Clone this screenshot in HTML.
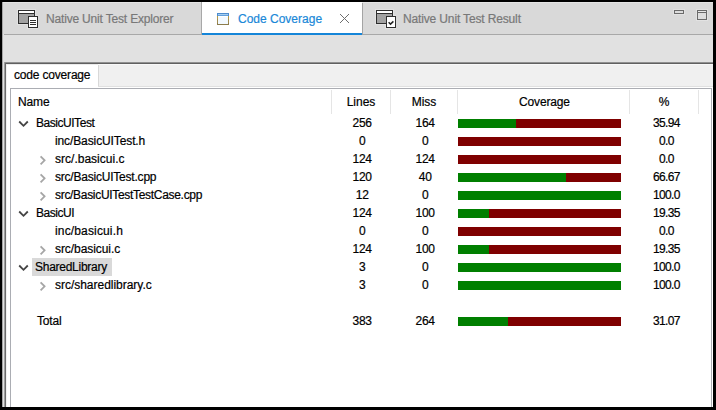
<!DOCTYPE html>
<html><head><meta charset="utf-8">
<style>
*{margin:0;padding:0;box-sizing:border-box}
html,body{width:716px;height:410px;overflow:hidden;background:#000}
body{position:relative;font-family:"Liberation Sans",sans-serif;font-size:12px;color:#000}
.a{position:absolute}
.t{position:absolute;white-space:nowrap;line-height:14px;-webkit-text-stroke:0.2px currentColor}
</style></head><body>
<!-- window -->
<div class="a" style="left:2px;top:2px;width:711px;height:405px;background:#e1e1e1"></div>
<!-- tab bar -->
<div class="a" style="left:2px;top:2px;width:711px;height:32px;background:#e4e4e4"></div>
<div class="a" style="left:3px;top:3px;width:710px;height:31px;background:#d9d9d9"></div>
<div class="a" style="left:2px;top:2px;width:1px;height:405px;background:#a6a6a6"></div>
<div class="a" style="left:4px;top:34px;width:709px;height:1px;background:#a8a8a8"></div>
<!-- active tab -->
<div class="a" style="left:201px;top:2px;width:1px;height:32px;background:#a8a8a8"></div>
<div class="a" style="left:202px;top:2px;width:160px;height:31px;background:#fff"></div>
<div class="a" style="left:202px;top:33px;width:160px;height:2px;background:#1585d8"></div>
<div class="a" style="left:362px;top:3px;width:1px;height:32px;background:#a4a4a4"></div>

<!-- tab 1 icon -->
<svg class="a" style="left:17px;top:9px" width="24" height="20" viewBox="0 0 24 20" shape-rendering="crispEdges">
 <rect x="0" y="0" width="19" height="16" fill="#e2e2e2"/>
 <rect x="10" y="6" width="11" height="14" fill="#e2e2e2"/>
 <rect x="1" y="1" width="17" height="14" fill="#2e2e2e"/>
 <rect x="2" y="2" width="15" height="2" fill="#fff"/>
 <rect x="2" y="5" width="15" height="9" fill="#a2a2a2"/>
 <rect x="11" y="7" width="10" height="12" fill="#2e2e2e"/>
 <rect x="12" y="8" width="8" height="10" fill="#fff"/>
 <rect x="13" y="11" width="6" height="1" fill="#2e2e2e"/>
 <rect x="13" y="13" width="6" height="1" fill="#2e2e2e"/>
 <rect x="13" y="15" width="6" height="1" fill="#2e2e2e"/>
</svg>

<!-- tab 2 icon -->
<svg class="a" style="left:217px;top:13px" width="12" height="12" viewBox="0 0 12 12" shape-rendering="crispEdges">
 <rect x="0" y="0" width="12" height="12" fill="#b49848"/>
 <rect x="0" y="6" width="12" height="6" fill="#a08a4c"/>
 <rect x="0" y="10" width="12" height="2" fill="#8c7c4c"/>
 <rect x="1" y="3" width="10" height="8" fill="#f2f9ff"/>
 <rect x="1" y="3" width="10" height="1" fill="#ffffff"/>
 <rect x="0" y="0" width="12" height="3" fill="#4d8cce"/>
 <rect x="1" y="2" width="10" height="1" fill="#62a0dc"/>
 <rect x="1" y="1" width="10" height="1" fill="#a4cdf0"/>
</svg>
<svg class="a" style="left:340px;top:14px" width="9" height="9" viewBox="0 0 9 9" shape-rendering="crispEdges">
 <g fill="#6e6e6e">
 <rect x="0" y="0" width="1" height="1"/><rect x="1" y="1" width="1" height="1"/><rect x="2" y="2" width="1" height="1"/><rect x="3" y="3" width="1" height="1"/><rect x="4" y="4" width="1" height="1"/><rect x="5" y="5" width="1" height="1"/><rect x="6" y="6" width="1" height="1"/><rect x="7" y="7" width="1" height="1"/><rect x="8" y="8" width="1" height="1"/>
 <rect x="8" y="0" width="1" height="1"/><rect x="7" y="1" width="1" height="1"/><rect x="6" y="2" width="1" height="1"/><rect x="5" y="3" width="1" height="1"/><rect x="3" y="5" width="1" height="1"/><rect x="2" y="6" width="1" height="1"/><rect x="1" y="7" width="1" height="1"/><rect x="0" y="8" width="1" height="1"/>
 </g>
</svg>

<!-- tab 3 icon -->
<svg class="a" style="left:375px;top:9px" width="24" height="20" viewBox="0 0 24 20">
 <g shape-rendering="crispEdges">
 <rect x="0" y="0" width="19" height="16" fill="#e2e2e2"/>
 <rect x="10" y="6" width="11" height="14" fill="#e2e2e2"/>
 <rect x="1" y="1" width="17" height="14" fill="#2e2e2e"/>
 <rect x="2" y="2" width="15" height="2" fill="#fff"/>
 <rect x="2" y="5" width="15" height="9" fill="#a2a2a2"/>
 <rect x="11" y="7" width="10" height="12" fill="#2e2e2e"/>
 <rect x="12" y="8" width="8" height="10" fill="#fff"/>
 </g>
 <path d="M13.6 13.3L15.5 15.1L18.4 12.4" stroke="#222" stroke-width="1.5" fill="none"/>
</svg>

<!-- min/max -->
<div class="a" style="left:674px;top:10px;width:10px;height:4px;border:1px solid #6a6a6a;background:#dcdcdc;box-shadow:0 0 0 1px #e2e2e2"></div>
<div class="a" style="left:697px;top:10px;width:10px;height:10px;border:1px solid #6a6a6a;background:#dedede;box-shadow:0 0 0 1px #e2e2e2"></div>
<div class="a" style="left:698px;top:11px;width:8px;height:1px;background:#e8e8e8"></div>
<div class="a" style="left:698px;top:12px;width:8px;height:1px;background:#6a6a6a"></div>

<!-- content panel -->
<div class="a" style="left:3px;top:35px;width:710px;height:27px;background:#e1e1e1"></div>
<div class="a" style="left:4px;top:62px;width:709px;height:1px;background:#909090"></div>
<div class="a" style="left:5px;top:63px;width:708px;height:1px;background:#606060"></div>
<div class="a" style="left:4px;top:62px;width:1px;height:345px;background:#a0a0a0"></div>
<div class="a" style="left:5px;top:63px;width:1px;height:344px;background:#6a6a6a"></div>
<div class="a" style="left:6px;top:64px;width:707px;height:343px;background:#fff"></div>
<div class="a" style="left:6px;top:64px;width:1px;height:343px;background:#f0f0f0"></div>
<div class="a" style="left:99px;top:65px;width:614px;height:21px;background:#f0f0f0"></div>
<div class="a" style="left:98px;top:65px;width:1px;height:22px;background:#d8d8d8"></div>
<div class="a" style="left:6px;top:64px;width:92px;height:1px;background:#ececec"></div>
<div class="a" style="left:98px;top:64px;width:615px;height:1px;background:#f8f8f8"></div>
<div class="a" style="left:98px;top:86px;width:615px;height:1px;background:#e0e0e0"></div>

<!-- table -->
<div class="a" style="left:10px;top:88px;width:702px;height:319px;border:1px solid #abadb3;border-bottom:0;background:#fff"></div>
<div class="a" style="left:331px;top:90px;width:1px;height:24px;background:#e5e5e5"></div>
<div class="a" style="left:390px;top:90px;width:1px;height:24px;background:#e5e5e5"></div>
<div class="a" style="left:457px;top:90px;width:1px;height:24px;background:#e5e5e5"></div>
<div class="a" style="left:629px;top:90px;width:1px;height:24px;background:#e5e5e5"></div>
<div class="a" style="left:698px;top:90px;width:1px;height:24px;background:#e5e5e5"></div>

<div class="t" style="left:332px;width:58px;text-align:center;top:95px">Lines</div>
<div class="t" style="left:391px;width:66px;text-align:center;top:95px">Miss</div>
<div class="t" style="left:630px;width:68px;text-align:center;top:95px">%</div>

<svg class="a" style="left:18px;top:120px" width="11" height="8" viewBox="0 0 11 8"><path d="M1.2 1.5L5.5 5.8L9.8 1.5" stroke="#444" stroke-width="1.8" fill="none"/></svg>
<div class="t" style="left:333px;width:58px;text-align:center;top:116px;letter-spacing:-0.3px;text-indent:0.3px">256</div>
<div class="t" style="left:392px;width:66px;text-align:center;top:116px;letter-spacing:-0.3px;text-indent:0.3px">164</div>
<div class="a" style="left:458px;top:119px;width:163px;height:9px;background:#7f0000"></div>
<div class="a" style="left:458px;top:119px;width:58px;height:9px;background:#007f00"></div>
<div class="t" style="left:632px;width:68px;text-align:center;top:116px;letter-spacing:-0.7px;text-indent:0.7px">35.94</div>
<div class="t" style="left:333px;width:58px;text-align:center;top:134px;letter-spacing:-0.3px;text-indent:0.3px">0</div>
<div class="t" style="left:392px;width:66px;text-align:center;top:134px;letter-spacing:-0.3px;text-indent:0.3px">0</div>
<div class="a" style="left:458px;top:137px;width:163px;height:9px;background:#7f0000"></div>
<div class="t" style="left:632px;width:68px;text-align:center;top:134px;letter-spacing:-0.7px;text-indent:0.7px">0.0</div>
<svg class="a" style="left:39px;top:155px" width="8" height="11" viewBox="0 0 8 11"><path d="M1.6 1.3L5.6 5.3L1.6 9.3" stroke="#a6a6a6" stroke-width="1.8" fill="none"/></svg>
<div class="t" style="left:333px;width:58px;text-align:center;top:152px;letter-spacing:-0.3px;text-indent:0.3px">124</div>
<div class="t" style="left:392px;width:66px;text-align:center;top:152px;letter-spacing:-0.3px;text-indent:0.3px">124</div>
<div class="a" style="left:458px;top:155px;width:163px;height:9px;background:#7f0000"></div>
<div class="t" style="left:632px;width:68px;text-align:center;top:152px;letter-spacing:-0.7px;text-indent:0.7px">0.0</div>
<svg class="a" style="left:39px;top:173px" width="8" height="11" viewBox="0 0 8 11"><path d="M1.6 1.3L5.6 5.3L1.6 9.3" stroke="#a6a6a6" stroke-width="1.8" fill="none"/></svg>
<div class="t" style="left:333px;width:58px;text-align:center;top:170px;letter-spacing:-0.3px;text-indent:0.3px">120</div>
<div class="t" style="left:392px;width:66px;text-align:center;top:170px;letter-spacing:-0.3px;text-indent:0.3px">40</div>
<div class="a" style="left:458px;top:173px;width:163px;height:9px;background:#7f0000"></div>
<div class="a" style="left:458px;top:173px;width:108px;height:9px;background:#007f00"></div>
<div class="t" style="left:632px;width:68px;text-align:center;top:170px;letter-spacing:-0.7px;text-indent:0.7px">66.67</div>
<svg class="a" style="left:39px;top:191px" width="8" height="11" viewBox="0 0 8 11"><path d="M1.6 1.3L5.6 5.3L1.6 9.3" stroke="#a6a6a6" stroke-width="1.8" fill="none"/></svg>
<div class="t" style="left:333px;width:58px;text-align:center;top:188px;letter-spacing:-0.3px;text-indent:0.3px">12</div>
<div class="t" style="left:392px;width:66px;text-align:center;top:188px;letter-spacing:-0.3px;text-indent:0.3px">0</div>
<div class="a" style="left:458px;top:191px;width:163px;height:9px;background:#7f0000"></div>
<div class="a" style="left:458px;top:191px;width:163px;height:9px;background:#007f00"></div>
<div class="t" style="left:632px;width:68px;text-align:center;top:188px;letter-spacing:-0.7px;text-indent:0.7px">100.0</div>
<svg class="a" style="left:18px;top:210px" width="11" height="8" viewBox="0 0 11 8"><path d="M1.2 1.5L5.5 5.8L9.8 1.5" stroke="#444" stroke-width="1.8" fill="none"/></svg>
<div class="t" style="left:333px;width:58px;text-align:center;top:206px;letter-spacing:-0.3px;text-indent:0.3px">124</div>
<div class="t" style="left:392px;width:66px;text-align:center;top:206px;letter-spacing:-0.3px;text-indent:0.3px">100</div>
<div class="a" style="left:458px;top:209px;width:163px;height:9px;background:#7f0000"></div>
<div class="a" style="left:458px;top:209px;width:31px;height:9px;background:#007f00"></div>
<div class="t" style="left:632px;width:68px;text-align:center;top:206px;letter-spacing:-0.7px;text-indent:0.7px">19.35</div>
<div class="t" style="left:333px;width:58px;text-align:center;top:224px;letter-spacing:-0.3px;text-indent:0.3px">0</div>
<div class="t" style="left:392px;width:66px;text-align:center;top:224px;letter-spacing:-0.3px;text-indent:0.3px">0</div>
<div class="a" style="left:458px;top:227px;width:163px;height:9px;background:#7f0000"></div>
<div class="t" style="left:632px;width:68px;text-align:center;top:224px;letter-spacing:-0.7px;text-indent:0.7px">0.0</div>
<svg class="a" style="left:39px;top:245px" width="8" height="11" viewBox="0 0 8 11"><path d="M1.6 1.3L5.6 5.3L1.6 9.3" stroke="#a6a6a6" stroke-width="1.8" fill="none"/></svg>
<div class="t" style="left:333px;width:58px;text-align:center;top:242px;letter-spacing:-0.3px;text-indent:0.3px">124</div>
<div class="t" style="left:392px;width:66px;text-align:center;top:242px;letter-spacing:-0.3px;text-indent:0.3px">100</div>
<div class="a" style="left:458px;top:245px;width:163px;height:9px;background:#7f0000"></div>
<div class="a" style="left:458px;top:245px;width:31px;height:9px;background:#007f00"></div>
<div class="t" style="left:632px;width:68px;text-align:center;top:242px;letter-spacing:-0.7px;text-indent:0.7px">19.35</div>
<div class="a" style="left:32px;top:258px;width:80px;height:18px;background:#d9d9d9"></div>
<svg class="a" style="left:18px;top:264px" width="11" height="8" viewBox="0 0 11 8"><path d="M1.2 1.5L5.5 5.8L9.8 1.5" stroke="#444" stroke-width="1.8" fill="none"/></svg>
<div class="t" style="left:333px;width:58px;text-align:center;top:260px;letter-spacing:-0.3px;text-indent:0.3px">3</div>
<div class="t" style="left:392px;width:66px;text-align:center;top:260px;letter-spacing:-0.3px;text-indent:0.3px">0</div>
<div class="a" style="left:458px;top:263px;width:163px;height:9px;background:#7f0000"></div>
<div class="a" style="left:458px;top:263px;width:163px;height:9px;background:#007f00"></div>
<div class="t" style="left:632px;width:68px;text-align:center;top:260px;letter-spacing:-0.7px;text-indent:0.7px">100.0</div>
<svg class="a" style="left:39px;top:281px" width="8" height="11" viewBox="0 0 8 11"><path d="M1.6 1.3L5.6 5.3L1.6 9.3" stroke="#a6a6a6" stroke-width="1.8" fill="none"/></svg>
<div class="t" style="left:333px;width:58px;text-align:center;top:278px;letter-spacing:-0.3px;text-indent:0.3px">3</div>
<div class="t" style="left:392px;width:66px;text-align:center;top:278px;letter-spacing:-0.3px;text-indent:0.3px">0</div>
<div class="a" style="left:458px;top:281px;width:163px;height:9px;background:#7f0000"></div>
<div class="a" style="left:458px;top:281px;width:163px;height:9px;background:#007f00"></div>
<div class="t" style="left:632px;width:68px;text-align:center;top:278px;letter-spacing:-0.7px;text-indent:0.7px">100.0</div>
<div class="t" style="left:333px;width:58px;text-align:center;top:314px;letter-spacing:-0.3px;text-indent:0.3px">383</div>
<div class="t" style="left:392px;width:66px;text-align:center;top:314px;letter-spacing:-0.3px;text-indent:0.3px">264</div>
<div class="a" style="left:458px;top:317px;width:163px;height:9px;background:#7f0000"></div>
<div class="a" style="left:458px;top:317px;width:50px;height:9px;background:#007f00"></div>
<div class="t" style="left:632px;width:68px;text-align:center;top:314px;letter-spacing:-0.7px;text-indent:0.7px">31.07</div>
<div class="t" id="tab1" style="left:46px;top:12px;color:#787878;letter-spacing:-0.177px">Native Unit Test Explorer</div>
<div class="t" id="tab2" style="left:238px;top:12px;color:#1a88d8;letter-spacing:0.000px">Code Coverage</div>
<div class="t" id="tab3" style="left:403px;top:12px;color:#787878;letter-spacing:-0.145px">Native Unit Test Result</div>
<div class="t" id="cc" style="left:14px;top:68px;color:#000;letter-spacing:-0.182px">code coverage</div>
<div class="t" id="hName" style="left:18px;top:95px;color:#000;letter-spacing:-0.130px">Name</div>
<div class="t" id="hCov" style="left:519px;top:95px;color:#000;letter-spacing:-0.144px">Coverage</div>
<div class="t" id="n0" style="left:36px;top:116px;color:#000;letter-spacing:-0.460px">BasicUITest</div>
<div class="t" id="n1" style="left:55px;top:134px;color:#000;letter-spacing:-0.111px">inc/BasicUITest.h</div>
<div class="t" id="n2" style="left:55px;top:152px;color:#000;letter-spacing:0.013px">src/.basicui.c</div>
<div class="t" id="n3" style="left:55px;top:170px;color:#000;letter-spacing:-0.214px">src/BasicUITest.cpp</div>
<div class="t" id="n4" style="left:55px;top:188px;color:#000;letter-spacing:-0.308px">src/BasicUITestTestCase.cpp</div>
<div class="t" id="n5" style="left:36px;top:206px;color:#000;letter-spacing:-0.469px">BasicUI</div>
<div class="t" id="n6" style="left:55px;top:224px;color:#000;letter-spacing:0.151px">inc/basicui.h</div>
<div class="t" id="n7" style="left:55px;top:242px;color:#000;letter-spacing:-0.068px">src/basicui.c</div>
<div class="t" id="n8" style="left:35px;top:260px;color:#000;letter-spacing:-0.266px">SharedLibrary</div>
<div class="t" id="n9" style="left:55px;top:278px;color:#000;letter-spacing:-0.022px">src/sharedlibrary.c</div>
<div class="t" id="n11" style="left:37px;top:314px;color:#000;letter-spacing:-0.200px">Total</div>
</body></html>
